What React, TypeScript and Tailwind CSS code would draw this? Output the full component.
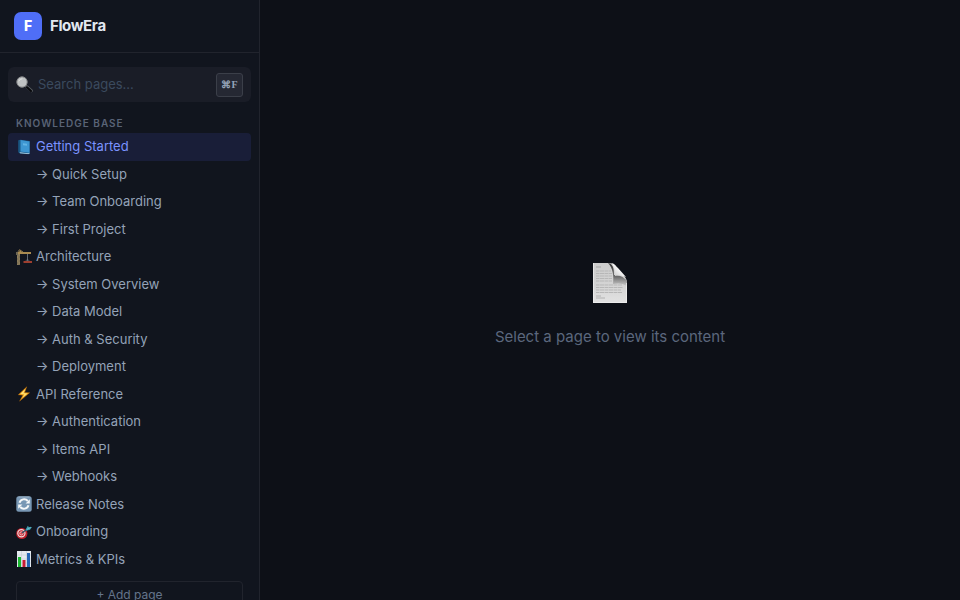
import { useState, type ReactNode } from "react";

function SearchIcon() {
  return (
    <svg viewBox="0 0 17 17" className="size-[17px] shrink-0" aria-hidden="true">
      <path d="M9.5 9.5l1.8 1.8" stroke="#777" strokeWidth="1.6" />
      <path d="M11 10.800l4.300 3.900" stroke="#5c6065" strokeWidth="3" strokeLinecap="round" />
      <path d="M11 11.300l4 3.700" stroke="#08090c" strokeWidth="2.200" strokeLinecap="round" />
      <circle cx="6" cy="6" r="5.2" fill="#bfc2c3" stroke="#858789" />
      <path d="M2.8 5.2a3.6 3.6 0 0 1 3.6-2.4" stroke="#dfe1e1" strokeWidth="1" fill="none" />
    </svg>
  );
}

function BookIcon() {
  return (
    <svg viewBox="0 0 16 16" className="size-4 shrink-0" aria-hidden="true">
      <path d="M2.5 1.3l2-.6 9.3 1.4v12.4l-1.2.8-8.6-.8-1.5-1z" fill="#1b5f91" />
      <path d="M3.5 13.2l9 1.1 1-.6v.8l-1 .6-8.5-.8z" fill="#b9d4e3" />
      <path d="M4.3 1l9.2 1.4v11.3l-9.2-1.1z" fill="#3d96d2" />
      <path d="M2.5 1.4L4.3 1v11.8l-1.2.6-.6-.8z" fill="#195681" />
      <path d="M7 4.2l4 .5v2l-4-.5z" fill="#61b3e5" />
    </svg>
  );
}

function CraneIcon() {
  return (
    <svg viewBox="0 0 16 16" className="size-4 shrink-0" aria-hidden="true">
      <path d="M1 4h3v12H1z" fill="#8d7d5c" />
      <path d="M1 6l3 2-3 2 3 2-3 2 3 2" stroke="#6b634e" strokeWidth=".5" fill="none" />
      <path d="M0 3h3l1-2 2 2h9v2H0z" fill="#a98b50" />
      <path d="M0 3h2v3H0z" fill="#6d6654" />
      <path d="M2 2.8L3.5.7 7 3" stroke="#937c4f" fill="none" />
      <path d="M11.5 5v7" stroke="#77818b" strokeWidth=".8" />
      <path d="M9.5 12l2-1.500 2 1.500" stroke="#77818b" strokeWidth=".6" fill="none" />
      <path d="M7.5 12H16v2H7.5z" fill="#9e3e2f" />
    </svg>
  );
}

function BoltIcon() {
  return (
    <svg viewBox="0 0 16 16" className="size-4 shrink-0" aria-hidden="true">
      <path d="M10.8.7L2.2 8.8l4.6.4-3.3 6 10.2-8.5-5-.3z" fill="#f5a51b" stroke="#a85f0c" strokeWidth=".4" />
      <path d="M9.4 2.7L4.4 8l4 .3-2 3.5 5.2-4.4-4.2-.2z" fill="#ffe477" />
    </svg>
  );
}

function RefreshIcon() {
  return (
    <svg viewBox="0 0 16 16" className="size-4 shrink-0" aria-hidden="true">
      <rect x=".3" y=".3" width="15.4" height="15.4" rx="2.5" fill="#7897b4" />
      <path d="M2.5 1h11" stroke="#a9bfd1" strokeWidth=".8" />
      <path d="M3.5 6.7A4.8 4.8 0 0 1 11.8 5M12.5 9.3A4.8 4.8 0 0 1 4.2 11" stroke="#f5f7f8" strokeWidth="2" fill="none" />
      <path d="M13.8 3.3v4.2H9.6zM2.2 12.7V8.5h4.2z" fill="#f5f7f8" />
    </svg>
  );
}

function TargetIcon() {
  return (
    <svg viewBox="0 0 16 16" className="size-4 shrink-0" aria-hidden="true">
      <ellipse cx="5.8" cy="9.5" rx="5.6" ry="5.6" fill="#bd1f2b" />
      <circle cx="5.4" cy="9.3" r="3.600" fill="none" stroke="#f0dedd" strokeWidth="1.2" />
      <circle cx="5.4" cy="9.4" r="1.700" fill="#d9414a" stroke="#f0dedd" strokeWidth=".8" />
      <path d="M6 9l6-4.6" stroke="#285568" strokeWidth="1.2" />
      <path d="M9.800 5.200l2-3.400 1.200 1.500 3-.2-2 2.600-3.800 1.100z" fill="#3e9caf" />
      <path d="M11 5.400l3.800-2.200" stroke="#79cbd5" strokeWidth=".7" />
    </svg>
  );
}

function ChartIcon() {
  return (
    <svg viewBox="0 0 16 16" className="size-4 shrink-0" aria-hidden="true">
      <path d="M1 0h14v16H1z" fill="#e4e9ef" />
      <path d="M1 4h14M1 8h14M1 12h14M5.5 0v16M10.5 0v16" stroke="#bec8d2" strokeWidth=".5" />
      <path d="M2 6h3v10H2z" fill="#1cb832" />
      <path d="M6.5 9h3v7h-3z" fill="#c91c34" />
      <path d="M11 2h3v14h-3z" fill="#2465b5" />
    </svg>
  );
}

function PageIcon() {
  return (
    <svg viewBox="0 0 40 40" className="size-10" aria-hidden="true">
      <defs>
        <linearGradient id="paper" x2="0" y2="1">
          <stop stopColor="#cdcdcd" />
          <stop offset=".55" stopColor="#d4d4d4" />
          <stop offset="1" stopColor="#e2e2e2" />
        </linearGradient>
        <linearGradient id="curl" x1="0" y1="0" x2="0" y2="1">
          <stop stopColor="#353535" />
          <stop offset=".6" stopColor="#6d6d6d" />
          <stop offset="1" stopColor="#cccccc" />
        </linearGradient>
        <linearGradient id="fold" x1="0" y1="1" x2="1" y2="0">
          <stop stopColor="#bbb" />
          <stop offset=".5" stopColor="#f2f2f2" />
        </linearGradient>
      </defs>
      <path d="M3 0h15c4 0 6 2 9 5l7 8c2 2 3 4 3 7v20H3z" fill="url(#paper)" />
      <path d="M6 4h5" stroke="#a5a5a5" />
      <path
        d="M6 8h15M6 10.500h16M6 13h16M6 15.500h16M6 18h16M6 22h26M6 24.500h27M6 27h25M6 29.500h26"
        stroke="#b7b7b7"
        strokeDasharray="3 .5 5 .5"
      />
      <path d="M6 33h5M6 35h9" stroke="#b2b2b2" />
      <path d="M18 0c5 1 6 5 6 12 5 0 10 2 13 6v5c-5-3-9-3-14-2 1-8 0-16-5-21z" fill="url(#curl)" />
      <path d="M21 0c3 0 5 3 7 5l8 9c-3-1-6-2-11-1 0-6-1-10-4-13z" fill="url(#fold)" />
      <path d="M3.500 0v39.500h33V20" stroke="#f0f0f0" strokeWidth=".7" fill="none" />
    </svg>
  );
}

type Page = { title: string; icon: ReactNode; children?: string[] };

const pages: Page[] = [
  { title: "Getting Started", icon: <BookIcon />, children: ["Quick Setup", "Team Onboarding", "First Project"] },
  {
    title: "Architecture",
    icon: <CraneIcon />,
    children: ["System Overview", "Data Model", "Auth & Security", "Deployment"],
  },
  { title: "API Reference", icon: <BoltIcon />, children: ["Authentication", "Items API", "Webhooks"] },
  { title: "Release Notes", icon: <RefreshIcon /> },
  { title: "Onboarding", icon: <TargetIcon /> },
  { title: "Metrics & KPIs", icon: <ChartIcon /> },
];

export default function App() {
  const [active, setActive] = useState("Getting Started");
  const [query, setQuery] = useState("");

  return (
    <div className="flex h-screen overflow-hidden bg-[#0d1017] font-['Inter',sans-serif] text-[#e2e8f0]">
      <aside className="flex w-65 shrink-0 flex-col overflow-y-auto border-r border-[#21242d] bg-[#11151e] [scrollbar-width:none]">
        {/* Brand */}
        <header className="flex shrink-0 items-center gap-2 border-b border-[#21242d] px-3.5 py-3">
          <div className="flex size-7 items-center justify-center rounded-[7px] bg-[#4f6ef7] text-sm font-extrabold text-white">
            F
          </div>
          <span className="text-[15px] font-bold tracking-tight">FlowEra</span>
        </header>

        <div className="px-2 pt-3.5 pb-2">
          {/* Search */}
          <div className="flex h-[35px] items-center gap-1 rounded-md bg-[#1a1d27] px-2">
            <SearchIcon />
            <input
              type="text"
              aria-label="Search pages"
              placeholder="Search pages..."
              value={query}
              onChange={(e) => setQuery(e.target.value)}
              className="min-w-0 flex-1 bg-transparent pl-px text-[13px] outline-none placeholder:text-[#3a4a5e]"
            />
            <kbd className="flex h-6 w-[27px] items-center justify-center rounded-[3px] border border-[#3b3f49] bg-[#252833] font-['Liberation_Serif',serif] text-[10px] font-bold text-[#94a3b8]">
              ⌘F
            </kbd>
          </div>

          <h2 className="mt-[15px] mb-1 px-2 text-[10px] leading-3 font-semibold tracking-widest text-[#596376]">
            KNOWLEDGE BASE
          </h2>

          {/* Page tree */}
          <nav className="text-[13px] leading-normal text-[#94a3b8]">
            {pages.map((page) => (
              <div key={page.title}>
                <button
                  type="button"
                  onClick={() => setActive(page.title)}
                  className={`flex w-full items-center gap-1 rounded px-2 py-1 text-left ${
                    active === page.title ? "bg-[#191e38] text-[#7b93ff]" : ""
                  }`}
                >
                  {page.icon}
                  {page.title}
                </button>
                {page.children?.map((child) => (
                  <button
                    key={child}
                    type="button"
                    onClick={() => setActive(child)}
                    className={`block w-full rounded py-1 pr-2 pl-7 text-left ${
                      active === child ? "bg-[#191e38] text-[#7b93ff]" : ""
                    }`}
                  >
                    → {child}
                  </button>
                ))}
              </div>
            ))}
          </nav>

          <div className="px-2 pt-2">
            <button
              type="button"
              className="w-full rounded border border-[#21242d] py-1 text-xs leading-[18px] text-[#64748b]"
            >
              + Add page
            </button>
          </div>
        </div>
      </aside>

      <main className="flex min-w-0 flex-1 flex-col items-center justify-center gap-[22px] pt-3 text-[#5b677d]">
        <PageIcon />
        <p className="text-[15px] leading-6">Select a page to view its content</p>
      </main>
    </div>
  );
}
